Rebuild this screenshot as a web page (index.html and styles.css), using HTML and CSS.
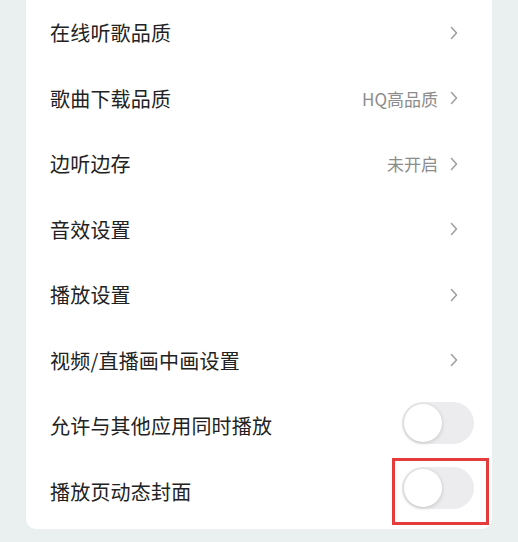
FILE: index.html
```html
<!DOCTYPE html>
<html lang="zh-CN">
<head>
<meta charset="utf-8">
<title>设置</title>
<link rel="stylesheet" href="styles.css">
</head>
<body>
<div class="card">
  <div class="row"><span class="label">在线听歌品质</span><span class="right"><svg class="chev" viewBox="0 0 8 14"><path d="M1.5 1.5 L6.5 7 L1.5 12.5"/></svg></span></div>
  <div class="row"><span class="label">歌曲下载品质</span><span class="right"><span class="value">HQ高品质</span><svg class="chev" viewBox="0 0 8 14"><path d="M1.5 1.5 L6.5 7 L1.5 12.5"/></svg></span></div>
  <div class="row"><span class="label">边听边存</span><span class="right"><span class="value">未开启</span><svg class="chev" viewBox="0 0 8 14"><path d="M1.5 1.5 L6.5 7 L1.5 12.5"/></svg></span></div>
  <div class="row"><span class="label">音效设置</span><span class="right"><svg class="chev" viewBox="0 0 8 14"><path d="M1.5 1.5 L6.5 7 L1.5 12.5"/></svg></span></div>
  <div class="row"><span class="label">播放设置</span><span class="right"><svg class="chev" viewBox="0 0 8 14"><path d="M1.5 1.5 L6.5 7 L1.5 12.5"/></svg></span></div>
  <div class="row"><span class="label">视频/直播画中画设置</span><span class="right"><svg class="chev" viewBox="0 0 8 14"><path d="M1.5 1.5 L6.5 7 L1.5 12.5"/></svg></span></div>
  <div class="row"><span class="label">允许与其他应用同时播放</span><span class="switch"><span class="knob"></span></span></div>
  <div class="row"><span class="label">播放页动态封面</span><span class="switch marked"><span class="knob"></span></span></div>
</div>
</body>
</html>
```
FILE: styles.css
```css
html, body {
  margin: 0;
  padding: 0;
  background: #eaefef;
}

body {
  font-family: "Noto Sans CJK SC", "Noto Sans", sans-serif;
  width: 518px;
  height: 542px;
  overflow: hidden;
}

.card {
  margin-left: 26px;
  width: 466px;
  background: #ffffff;
  border-radius: 0 0 10px 10px;
  padding-bottom: 5px;
}

.row {
  height: 65.5px;
  display: flex;
  align-items: center;
  justify-content: space-between;
  padding: 0 18px 0 24px;
}

.label {
  font-size: 20px;
  color: #222222;
  letter-spacing: 0.2px;
}

.right {
  display: flex;
  align-items: center;
  gap: 12px;
  margin-right: 16px;
}

.value {
  font-size: 17px;
  color: #8c8c8c;
}

.chev {
  width: 8px;
  height: 14px;
  fill: none;
  stroke: #a0a0a0;
  stroke-width: 1.6;
  stroke-linecap: round;
  stroke-linejoin: round;
}

.switch {
  position: relative;
  width: 72px;
  height: 42px;
  border-radius: 21px;
  background: #ececef;
  margin-top: -6px;
}

.knob {
  position: absolute;
  left: 2px;
  top: 2px;
  width: 38px;
  height: 38px;
  border-radius: 50%;
  background: #ffffff;
  box-shadow: 0 1px 4px rgba(0, 0, 0, 0.18);
}

/* highlight frame drawn over the second switch */
.marked::after {
  content: "";
  position: absolute;
  left: -10px;
  top: -9px;
  width: 91px;
  height: 61px;
  border: 3px solid #e53b3b;
}
```
